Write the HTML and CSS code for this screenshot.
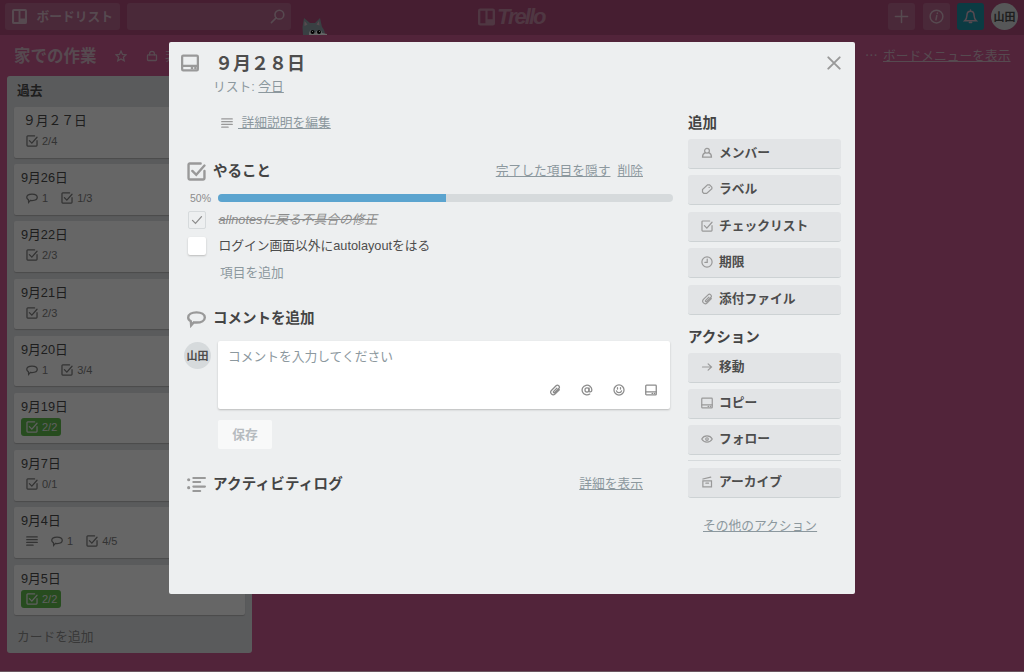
FILE: index.html
```html
<!DOCTYPE html>
<html lang="ja">
<head>
  <meta charset="UTF-8" />
  <meta name="viewport" content="width=device-width, initial-scale=1.0" />
  <title>９月２８日 | Trello</title>
  <link rel="stylesheet" href="styles.css">
</head>
<body>

  <!-- Icons -->
  <svg class="sprite" width="0" height="0">
    <symbol id="i-board" viewBox="0 0 16 16"><path fill-rule="evenodd" fill="currentColor" stroke="none" d="M2 0h12a2 2 0 0 1 2 2v12a2 2 0 0 1-2 2H2a2 2 0 0 1-2-2V2a2 2 0 0 1 2-2zM2.2 2.2v11.600h4.800v-11.600zM9 2.200v7.800h4.800V2.200z"/></symbol>
    <symbol id="i-search" viewBox="0 0 16 16"><circle cx="10" cy="6" r="4.700"/><path d="M6.500 9.500 1.500 14.500"/></symbol>
    <symbol id="i-star" viewBox="0 0 16 16"><path d="M8 1.500 10 6l4.800.4-3.600 3.200 1.100 4.800L8 11.900l-4.300 2.500 1.100-4.800L1.200 6.400 6 6z"/></symbol>
    <symbol id="i-lock" viewBox="0 0 16 16"><rect x="2" y="6.500" width="12" height="7.500" rx="1"/><path d="M4.800 6.500V5a3.200 3.200 0 0 1 6.400 0v1.500"/></symbol>
    <symbol id="i-plus" viewBox="0 0 16 16"><path d="M8 1.500v13M1.500 8h13"/></symbol>
    <symbol id="i-info" viewBox="0 0 16 16"><circle cx="8" cy="8" r="6.800"/><path d="M8.300 7 7.400 11.500M8.900 4.300v.6"/></symbol>
    <symbol id="i-bell" viewBox="0 0 16 16"><path d="M2 12.500c2-1.500 2-3 2.200-6C4.400 3.500 6 2.500 8 2.500s3.600 1 3.800 4c.2 3 .2 4.500 2.200 6zM8 2.500V1M6.800 14.500h2.400"/></symbol>
    <symbol id="i-card" viewBox="0 0 16 16"><rect x="1" y="1.500" width="14" height="13" rx="1"/><path d="M1 10.500h14"/><path d="M9.500 12.500h.6M12.500 12.500h.6"/></symbol>
    <symbol id="i-lines" viewBox="0 0 16 16"><path d="M1 2.500h14M1 6.200h14M1 9.900h14M1 13.600h8.500"/></symbol>
    <symbol id="i-check" viewBox="0 0 16 16"><path d="M11.500 1.300H2.300a1 1 0 0 0-1 1v11.400a1 1 0 0 0 1 1h11.400a1 1 0 0 0 1-1V7.500"/><path d="M4.500 7.500 7.800 10.800 14.700 3"/></symbol>
    <symbol id="i-tick" viewBox="0 0 16 16"><path d="M2 8.500 6 12.500 14 3.500"/></symbol>
    <symbol id="i-comment" viewBox="0 0 16 16"><path d="M8 2.800c4 0 7 1.700 7 4.300s-3 4.300-7 4.300c-.8 0-1.500 0-2.200-.2L3.500 13.800l-.3-3.500C1.800 9.500 1 8.400 1 7.100c0-2.600 3-4.300 7-4.300z"/></symbol>
    <symbol id="i-activity" viewBox="0 0 18 16"><path d="M6 1.800h11M6 5.600h6.500M6 10h11M6 14.200h6.500"/><circle class="dot" cx="1.600" cy="3.500" r="1.500"/><circle class="dot" cx="1.600" cy="11" r="1.500"/></symbol>
    <symbol id="i-clip" viewBox="0 0 16 16"><path d="M10.500 5.500 6.200 9.800a1 1 0 0 0 1.500 1.500l5.300-5.300a2.500 2.500 0 0 0-3.600-3.600L3.200 8.600a3.400 3.400 0 0 0 4.800 4.800l5.800-5.800"/></symbol>
    <symbol id="i-at" viewBox="0 0 16 16"><circle cx="8" cy="8" r="2.700"/><path d="M10.700 5.200V9.200c0 2 3.800 1.800 3.800-1.200a6.500 6.500 0 1 0-2.800 5.400"/></symbol>
    <symbol id="i-smile" viewBox="0 0 16 16"><circle cx="8" cy="8" r="6.700"/><path d="M4.600 9.200c.8 3.200 6 3.200 6.800 0M6 5v1.700M10 5v1.700"/></symbol>
    <symbol id="i-person" viewBox="0 0 16 16"><circle cx="8" cy="5" r="3.200"/><path d="M5.800 7.500C3 8.500 2 10.500 2 13.500h12c0-3-1-5-3.800-6"/></symbol>
    <symbol id="i-label" viewBox="0 0 16 16"><path d="M8.700 2.500h2.800l3 3v2.200L7.500 13.800H3.700L2 12V8.800z"/><path d="M10.800 5.900h.2"/></symbol>
    <symbol id="i-clock" viewBox="0 0 16 16"><circle cx="8" cy="8" r="6.800"/><path d="M8.300 4v4.500H5.200"/></symbol>
    <symbol id="i-arrow" viewBox="0 0 16 16"><path d="M2 8h12M9.500 3.800 14 8 9.500 12.200"/></symbol>
    <symbol id="i-eye" viewBox="0 0 16 16"><path d="M1 8c3-5.500 11-5.500 14 0-3 5.500-11 5.500-14 0z"/><circle cx="8" cy="8" r="1.700"/></symbol>
    <symbol id="i-archive" viewBox="0 0 16 16"><path d="M2.500 6.500h11.500v8H2.500zM2.500 4 13 1.400M6.500 9.500h3.500"/></symbol>
    <symbol id="i-close" viewBox="0 0 16 16"><path d="M1.500 1.500 14.500 14.500M14.500 1.500 1.500 14.500"/></symbol>
  </svg>

  <!-- Top bar -->
  <header class="topbar">
    <div class="top-btn boards"><svg class="icon"><use href="#i-board"/></svg>ボードリスト</div>
    <div class="top-btn search"><svg class="icon"><use href="#i-search"/></svg></div>
    <svg class="taco" viewBox="0 0 27 18">
      <path fill="#8fa0a8" d="M2 18l-.5-8L3 1l6 5h5l5-5 2 9c2 2 3 5 3 8z"/>
      <path fill="#d8b8c4" d="M3.500 9V4l3 3.500zM18.500 8.500 18 4l-2.500 3.500z"/>
      <path fill="#fff" d="M8 18c0-7 5-6 6-1 1-5 7-5 7-1l5 1v1z"/>
      <circle cx="11.500" cy="15" r="2"/><circle cx="18" cy="15" r="2"/>
      <path fill="#fff" d="M11 14h1v1h-1zM18 14h1v1h-1z"/>
    </svg>
    <div class="logo"><svg class="icon"><use href="#i-board"/></svg><span>Trello</span></div>
    <div class="top-btn square"><svg class="icon"><use href="#i-plus"/></svg></div>
    <div class="top-btn square"><svg class="icon"><use href="#i-info"/></svg></div>
    <div class="top-btn square bell"><svg class="icon"><use href="#i-bell"/></svg></div>
    <div class="avatar">山田</div>
  </header>

  <div class="board-header">
    <h1>家での作業</h1>
    <svg class="icon star"><use href="#i-star"/></svg>
    <svg class="icon lock"><use href="#i-lock"/></svg>
    <span class="visibility">非公開</span>
    <span class="dots">⋯</span>
    <a class="show-menu">ボードメニューを表示</a>
  </div>

  <main class="board">
    <section class="list">
      <h2>過去</h2>
      <div class="card">
        <p class="wide">９月２７日</p>
        <div class="badges"><span class="badge"><svg class="icon"><use href="#i-check"/></svg>2/4</span></div>
      </div>
      <div class="card">
        <p>9月26日</p>
        <div class="badges">
          <span class="badge"><svg class="icon"><use href="#i-comment"/></svg>1</span>
          <span class="badge"><svg class="icon"><use href="#i-check"/></svg>1/3</span>
        </div>
      </div>
      <div class="card">
        <p>9月22日</p>
        <div class="badges"><span class="badge"><svg class="icon"><use href="#i-check"/></svg>2/3</span></div>
      </div>
      <div class="card">
        <p>9月21日</p>
        <div class="badges"><span class="badge"><svg class="icon"><use href="#i-check"/></svg>2/3</span></div>
      </div>
      <div class="card">
        <p>9月20日</p>
        <div class="badges">
          <span class="badge"><svg class="icon"><use href="#i-comment"/></svg>1</span>
          <span class="badge"><svg class="icon"><use href="#i-check"/></svg>3/4</span>
        </div>
      </div>
      <div class="card">
        <p>9月19日</p>
        <div class="badges"><span class="badge done"><svg class="icon"><use href="#i-check"/></svg>2/2</span></div>
      </div>
      <div class="card">
        <p>9月7日</p>
        <div class="badges"><span class="badge"><svg class="icon"><use href="#i-check"/></svg>0/1</span></div>
      </div>
      <div class="card">
        <p>9月4日</p>
        <div class="badges">
          <span class="badge"><svg class="icon"><use href="#i-lines"/></svg></span>
          <span class="badge"><svg class="icon"><use href="#i-comment"/></svg>1</span>
          <span class="badge"><svg class="icon"><use href="#i-check"/></svg>4/5</span>
        </div>
      </div>
      <div class="card">
        <p>9月5日</p>
        <div class="badges"><span class="badge done"><svg class="icon"><use href="#i-check"/></svg>2/2</span></div>
      </div>
      <div class="add-card">カードを追加</div>
    </section>
  </main>

  <!-- Card window -->
  <div class="overlay">
    <div class="window">
      <svg class="icon close"><use href="#i-close"/></svg>

      <div class="window-header">
        <svg class="icon"><use href="#i-card"/></svg>
        <div>
          <h2>９月２８日</h2>
          <p>リスト: <a>今日</a></p>
        </div>
      </div>

      <div class="columns">
        <div class="main">
          <div class="description"><svg class="icon"><use href="#i-lines"/></svg><a>&nbsp;詳細説明を編集</a></div>

          <div class="heading">
            <svg class="icon"><use href="#i-check"/></svg>
            <h3>やること</h3>
            <a>完了した項目を隠す</a>
            <a>削除</a>
          </div>
          <div class="progress">
            <span>50%</span>
            <div class="bar"><div class="fill" style="width: 50%"></div></div>
          </div>
          <div class="item checked">
            <div class="checkbox"><svg class="icon"><use href="#i-tick"/></svg></div>
            <span>allnotesに戻る不具合の修正</span>
          </div>
          <div class="item">
            <div class="checkbox"></div>
            <span>ログイン画面以外にautolayoutをはる</span>
          </div>
          <div class="add-item">項目を追加</div>

          <div class="heading comment-heading">
            <svg class="icon"><use href="#i-comment"/></svg>
            <h3>コメントを追加</h3>
          </div>
          <div class="comment">
            <div class="avatar">山田</div>
            <div class="comment-box">
              <p>コメントを入力してください</p>
              <div class="tools">
                <svg class="icon"><use href="#i-clip"/></svg>
                <svg class="icon"><use href="#i-at"/></svg>
                <svg class="icon"><use href="#i-smile"/></svg>
                <svg class="icon"><use href="#i-card"/></svg>
              </div>
            </div>
          </div>
          <button class="save">保存</button>

          <div class="heading">
            <svg class="icon"><use href="#i-activity"/></svg>
            <h3 class="activity">アクティビティログ</h3>
            <a>詳細を表示</a>
          </div>
        </div>

        <aside class="sidebar">
          <h3>追加</h3>
          <a class="action"><svg class="icon"><use href="#i-person"/></svg>メンバー</a>
          <a class="action"><svg class="icon"><use href="#i-label"/></svg>ラベル</a>
          <a class="action"><svg class="icon"><use href="#i-check"/></svg>チェックリスト</a>
          <a class="action"><svg class="icon"><use href="#i-clock"/></svg>期限</a>
          <a class="action"><svg class="icon"><use href="#i-clip"/></svg>添付ファイル</a>
          <h3 class="second">アクション</h3>
          <a class="action"><svg class="icon"><use href="#i-arrow"/></svg>移動</a>
          <a class="action"><svg class="icon"><use href="#i-card"/></svg>コピー</a>
          <a class="action"><svg class="icon"><use href="#i-eye"/></svg>フォロー</a>
          <hr>
          <a class="action"><svg class="icon"><use href="#i-archive"/></svg>アーカイブ</a>
          <a class="more">その他のアクション</a>
        </aside>
      </div>
    </div>
  </div>

</body>
</html>
```
FILE: styles.css
```css
* {
  box-sizing: border-box;
  margin: 0;
  padding: 0;
}

html {
  background: #cd5a91;
}

body {
  width: 1024px;
  height: 672px;
  overflow: hidden;
  position: relative;
  background: #cd5a91;
  border-bottom: 1px solid #6b5660;
  color: #4d4d4d;
  font-family: "Liberation Sans", "Noto Sans CJK JP", sans-serif;
  font-size: 12.75px;
  line-height: 18px;
}

.sprite {
  display: block;
}

.icon {
  width: 12px;
  height: 12px;
  flex: none;
  fill: none;
  stroke: currentColor;
  stroke-width: 1.7;
  stroke-linecap: round;
}

.dot {
  fill: currentColor;
  stroke: none;
}

/* Top bar */
.topbar {
  height: 35px;
  padding: 3px 5px 5px;
  display: flex;
  background: #ae4c7b;
}

.top-btn {
  height: 27px;
  border-radius: 3px;
  background: rgba(255, 255, 255, 0.15);
  color: #d8b8c8;
  display: flex;
  align-items: center;
}

.boards {
  width: 115px;
  padding-left: 7px;
  gap: 9.5px;
  font-weight: bold;
}

.boards .icon {
  width: 15px;
  height: 15px;
}

.search {
  width: 164px;
  margin-left: 7px;
  padding-right: 6px;
  justify-content: flex-end;
}

.search .icon {
  width: 15px;
  height: 15px;
}

.taco {
  width: 27px;
  height: 18px;
  margin: 14px 0 0 10px;
}

.logo {
  width: 410px;
  margin-left: 150px;
  height: 27px;
  display: flex;
  align-items: center;
  gap: 2px;
  color: #c58aa6;
  font-size: 22px;
  font-weight: bold;
  font-style: italic;
  letter-spacing: -2px;
}

.logo .icon {
  width: 17px;
  height: 18px;
}

.square {
  width: 27px;
  margin-right: 7.5px;
  justify-content: center;
}

.square .icon {
  width: 15px;
  height: 15px;
  stroke-width: 1.6;
}

.bell {
  background: #1c93a8;
  margin-right: 7px;
}

.avatar {
  width: 27px;
  height: 27px;
  flex: none;
  border-radius: 50%;
  background: #d6dadc;
  color: #4d4d4d;
  font-size: 11px;
  font-weight: bold;
  line-height: 28px;
  text-align: center;
}

/* Board */
.board-header {
  height: 41px;
  padding: 0 13px 0 14px;
  display: flex;
  align-items: center;
  color: #d8b8c8;
}

.board-header h1 {
  width: 101px;
  flex: none;
  font-size: 16.5px;
}

.board-header .lock {
  margin: 0 7px 0 19px;
}

.visibility {
  width: 700px;
}

.dots {
  width: 18px;
  flex: none;
}

.show-menu {
  white-space: nowrap;
  text-decoration: underline;
}

.board {
  padding-left: 7px;
}

.list {
  width: 245px;
  height: 577px;
  padding: 0 7px;
  border-radius: 3px;
  background: #e2e4e6;
}

.list h2 {
  padding: 6px 3px;
  height: 31px;
  font-size: 12.75px;
}

.card {
  height: 50.5px;
  margin-bottom: 6.7px;
  padding: 5px 7px 0;
  border-radius: 2px;
  background: #fff;
  box-shadow: 0 1px 1px #bbb;
}

.card p.wide {
  padding-left: 2px;
}

.badges {
  display: flex;
  align-items: center;
  gap: 4px;
  margin-top: 2px;
}

.badge {
  height: 18px;
  padding: 0 4px 0 5px;
  border-radius: 3px;
  display: flex;
  align-items: center;
  gap: 4px;
  color: #808080;
  font-size: 11px;
}

.badge.done {
  background: #61bd4f;
  color: #eee;
}

.add-card {
  padding: 6px 3px;
  color: #8c8c8c;
}

/* Card window */
.overlay {
  position: absolute;
  inset: 0;
  background: rgba(0, 0, 0, 0.6);
}

.window {
  position: relative;
  width: 686px;
  height: 552px;
  margin: 42px 0 0 169px;
  border-radius: 2px;
  background: #edeff0;
}

.window a {
  color: #8c989e;
}

.close {
  position: absolute;
  top: 14px;
  right: 14px;
  width: 14px;
  height: 14px;
  stroke-width: 2.2;
  color: #999;
}

.window-header {
  height: 70px;
  padding: 8px 0 0 11px;
  display: flex;
  gap: 15px;
}

.window-header .icon {
  width: 20px;
  height: 18px;
  margin-top: 4px;
  stroke-width: 2;
  color: #999;
}

.window-header h2 {
  font-size: 18px;
  line-height: 28px;
}

.window-header p {
  color: #8c989e;
  margin-left: -2px;
}

.window-header p a,
.description a,
.heading a,
.more {
  text-decoration: underline;
}

.columns {
  display: flex;
}

.main {
  width: 519px;
  padding-left: 15px;
}

.description {
  height: 20px;
  padding: 1px 0 0 37px;
  display: flex;
  align-items: center;
  gap: 5px;
}

.description .icon {
  color: #999;
}

.heading {
  height: 22px;
  margin-top: 28px;
  padding: 0 45px 0 3px;
  display: flex;
  align-items: center;
  gap: 7px;
}

.heading .icon {
  width: 19px;
  height: 19px;
  stroke-width: 2;
  color: #999;
}

.heading h3 {
  flex: 1;
}

h3 {
  font-size: 14.5px;
  color: #444;
}

h3.activity {
  letter-spacing: 0.2px;
}

.progress {
  height: 16px;
  margin: 8px 15px 5px 6px;
  display: flex;
  align-items: center;
  color: #8c8c8c;
  font-size: 10.5px;
}

.progress span {
  width: 28px;
}

.bar {
  flex: 1;
  height: 8px;
  border-radius: 4px;
  overflow: hidden;
  background: #d6dadc;
}

.fill {
  height: 8px;
  background: #5ba4cf;
}

.item {
  height: 18px;
  margin-bottom: 7.5px;
  padding-left: 4px;
  display: flex;
  align-items: center;
  gap: 12.5px;
}

.checkbox {
  width: 18px;
  height: 18px;
  border-radius: 2px;
  background: #fff;
  box-shadow: 0 1px 2px #bbb;
  display: flex;
  align-items: center;
  justify-content: center;
}

.checked .checkbox {
  background: #edeff0;
  border: 1px solid #d6dadc;
  box-shadow: none;
}

.checked {
  color: #8c8c8c;
  font-style: italic;
  text-decoration: line-through;
}

.add-item {
  padding: 2px 0 0 36px;
  color: #8c989e;
}

.comment-heading {
  margin-top: 25px;
}

.comment {
  display: flex;
  gap: 7px;
  margin-top: 12px;
}

.comment .avatar {
  margin-top: 1px;
}

.comment-box {
  width: 452px;
  height: 68px;
  padding: 7px 13px 0 10px;
  border-radius: 2px;
  background: #fff;
  box-shadow: 0 1px 2px #bbb;
  color: #8c989e;
}

.tools {
  display: flex;
  justify-content: flex-end;
  gap: 20px;
  margin-top: 18px;
  color: #8c8c8c;
}

.save {
  display: block;
  width: 54px;
  height: 29px;
  margin: 11px 0 0 34px;
  border: none;
  border-radius: 2px;
  background: #f8f9f9;
  color: #b6bbbf;
  font: inherit;
  font-weight: bold;
}

.save + .heading {
  margin-top: 24px;
}

.sidebar {
  width: 153px;
}

.sidebar h3 {
  height: 27px;
  line-height: 22px;
}

.sidebar h3.second {
  margin-top: 11px;
}

.action {
  height: 30px;
  margin-bottom: 6.4px;
  padding: 0 0 1px 13px;
  border-radius: 3px;
  border-bottom: 1px solid #cdd2d4;
  background: #e2e4e6;
  display: flex;
  align-items: center;
  gap: 6px;
  font-weight: bold;
}

.window .action {
  color: #4d4d4d;
}

.action .icon {
  color: #999;
  stroke-width: 1.6;
}

.sidebar hr {
  border: none;
  border-top: 1px solid #d6dadc;
  margin: -2px 0 7px;
}

.more {
  display: block;
  margin-top: 19px;
  padding-left: 15px;
}
```
